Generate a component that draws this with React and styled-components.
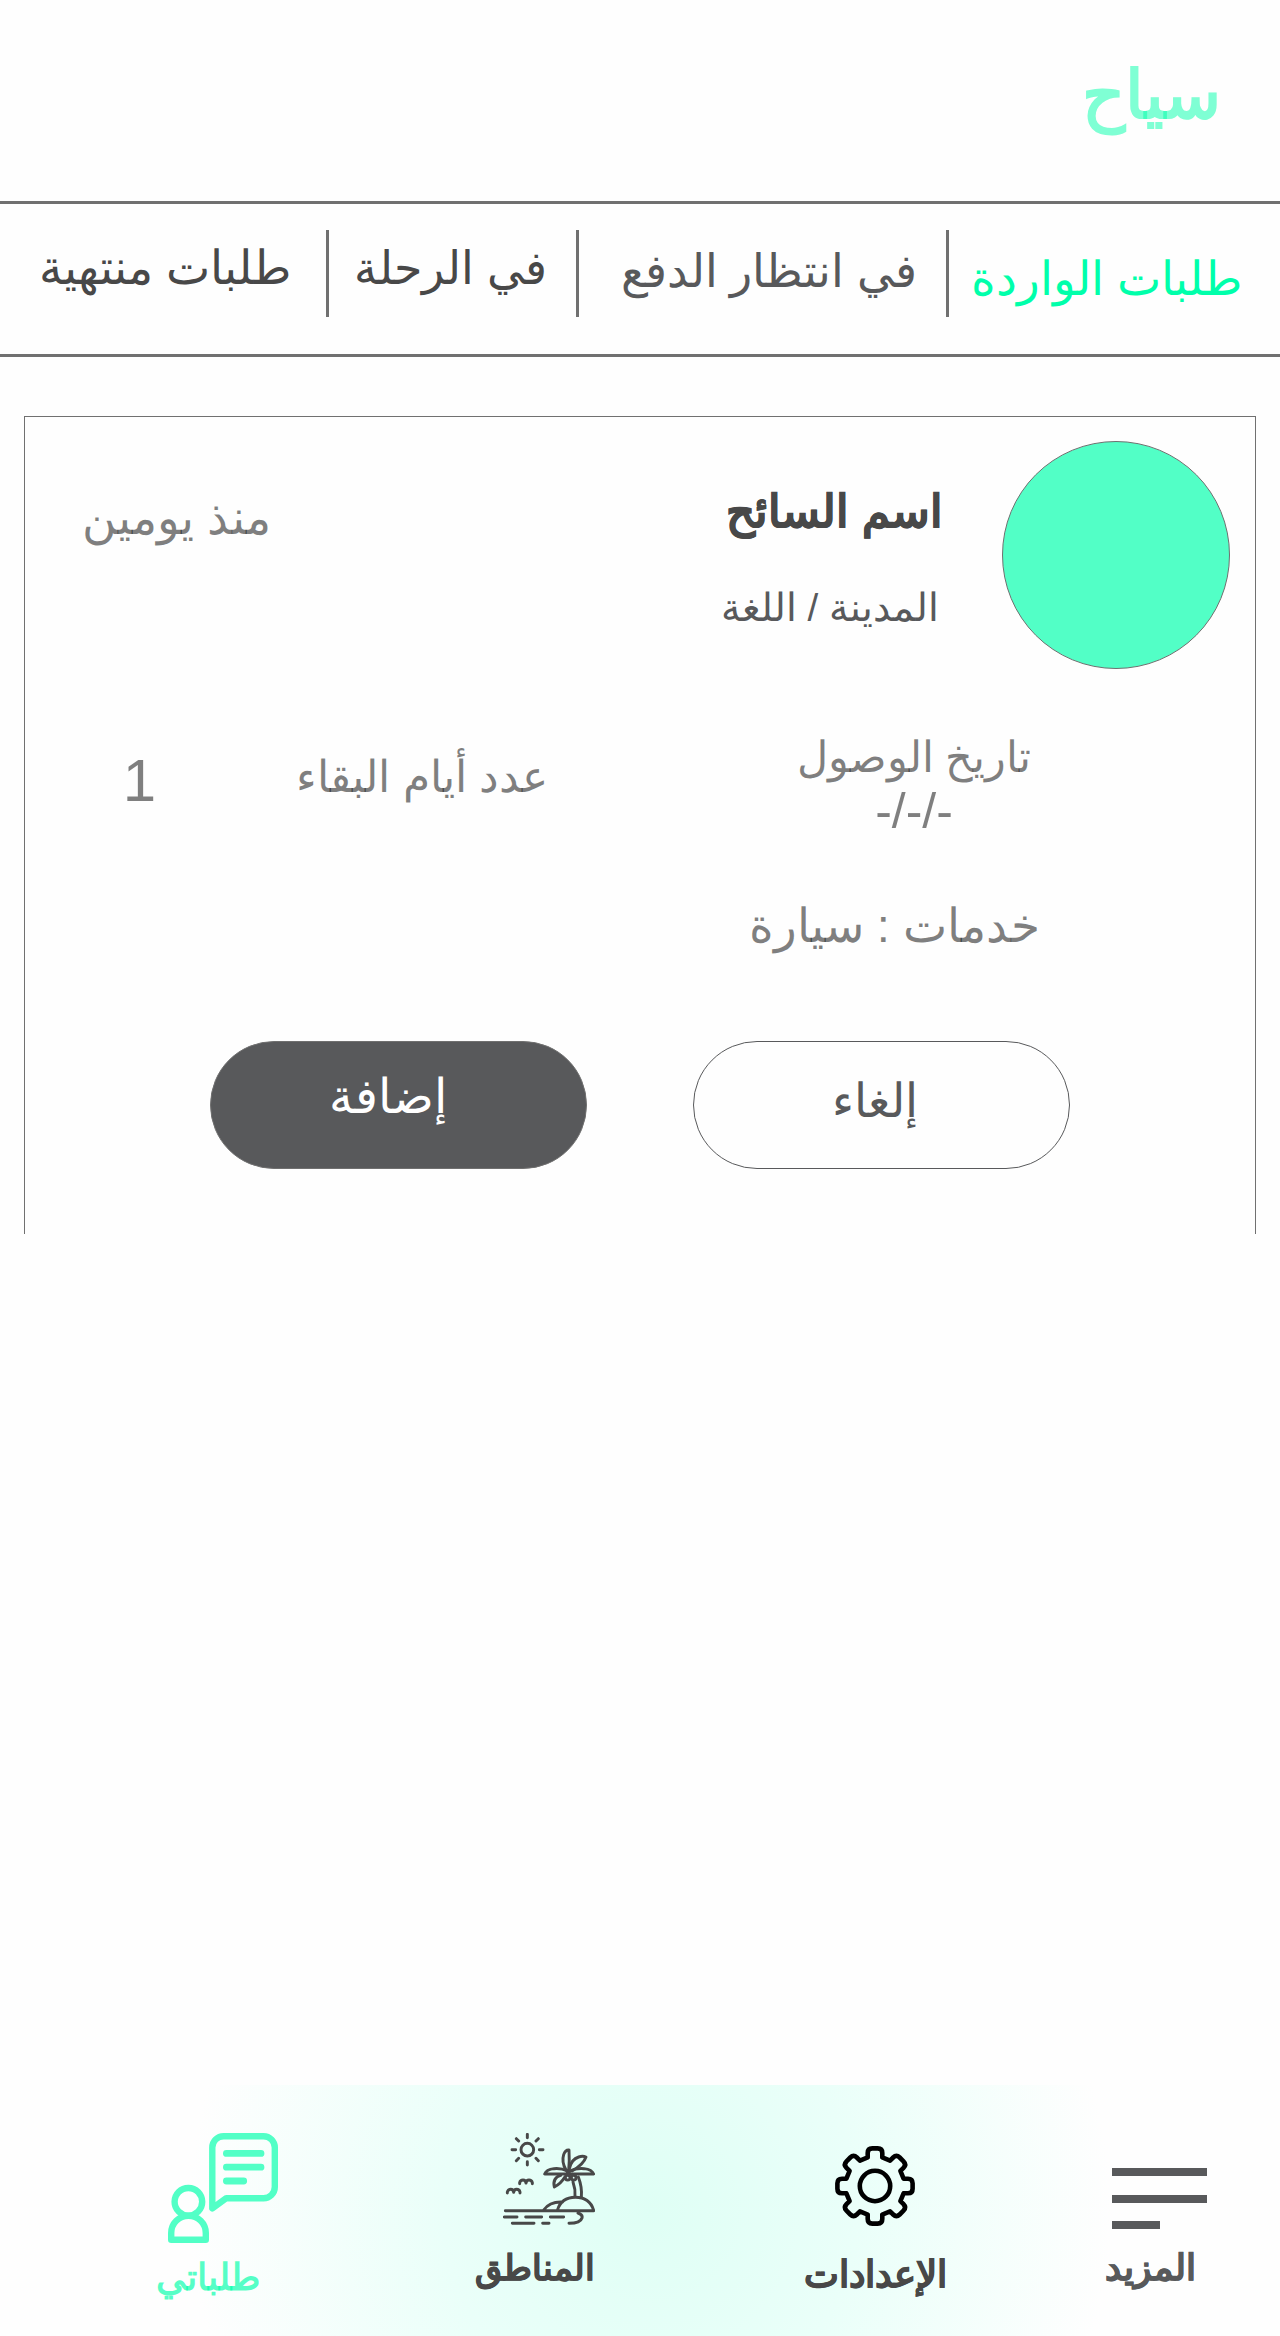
import React from "react";
import styled, { createGlobalStyle } from "styled-components";

const mint = "rgba(0, 255, 170, 0.68)";
const mintSolid = "#52ffc6";
const slate = "#58595b";
const charcoal = "#484848";
const muted = "rgba(0, 0, 0, 0.5)";
const line = "#707070";

const GlobalStyle = createGlobalStyle`
  *, *::before, *::after { box-sizing: border-box; }
  body {
    margin: 0;
    background: #fff;
    font-family: "Liberation Sans", sans-serif;
  }
`;

const Page = styled.div`
  direction: rtl;
  width: 1280px;
  height: 2336px;
  display: flex;
  flex-direction: column;
  background: #fefefe;
  overflow: hidden;
`;

const Header = styled.header`
  height: 201px;
  padding: 55px 59px 0 0;
`;

const Title = styled.h1`
  margin: 0;
  font-size: 67px;
  font-weight: 700;
  line-height: 80px;
  color: rgba(0, 255, 170, 0.5);
`;

const Tabs = styled.nav`
  display: grid;
  grid-template-columns: 331px 3px 367px 3px 247px 3px 326px;
  height: 156px;
  border-top: 3px solid ${line};
  border-bottom: 3px solid ${line};
`;

const Tab = styled.a`
  padding: ${(p) => p.$drop}px ${(p) => p.$inset}px 0 0;
  font-size: ${(p) => p.$size}px;
  line-height: 60px;
  white-space: nowrap;
  color: ${(p) => p.$color};
`;

const Divider = styled.span`
  margin-top: 26px;
  height: 87px;
  background: ${line};
`;

const Card = styled.article`
  margin: 59px 24px 0;
  height: 818px;
  border: 1px solid ${line};
  border-bottom: 0;
`;

const CardHead = styled.div`
  display: flex;
  height: 252px;
  padding: 24px 25px 0 57px;
`;

const Avatar = styled.div`
  width: 228px;
  height: 228px;
  flex: none;
  border-radius: 50%;
  border: 1px solid ${line};
  background: ${mintSolid};
`;

const Identity = styled.div`
  margin-right: 59px;
  padding-top: 41px;
  white-space: nowrap;
`;

const Name = styled.h2`
  margin: 0;
  font-size: 45px;
  font-weight: 700;
  line-height: 60px;
  color: ${charcoal};
  -webkit-text-stroke: 0.7px currentColor;
`;

const City = styled.p`
  margin: 41px 4px 0 0;
  font-size: 38.6px;
  line-height: 50px;
  color: ${slate};
`;

const Posted = styled.time`
  margin-right: auto;
  padding-top: 47px;
  font-size: 47px;
  line-height: 60px;
  white-space: nowrap;
  color: ${muted};
`;

const Details = styled.div`
  display: flex;
  margin-top: 61px;
  padding-right: 223px;
  height: 108px;
  color: ${muted};
  white-space: nowrap;
`;

const Arrival = styled.div`
  width: 236px;
  text-align: center;
  font-size: 42.8px;
  line-height: 54px;
`;

const ArrivalDate = styled.div`
  font-size: 50px;
  line-height: 54px;
`;

const StayLabel = styled.div`
  margin-right: 248px;
  padding-top: 17px;
  width: 261px;
  font-size: 44.3px;
  line-height: 60px;
`;

const StayCount = styled.div`
  margin-right: 131px;
  padding-top: 21px;
  font-size: 60px;
  line-height: 60px;
`;

const Services = styled.p`
  margin: 58px 215px 0 0;
  font-size: 47.1px;
  line-height: 60px;
  color: ${muted};
`;

const Actions = styled.div`
  display: flex;
  gap: 106px;
  margin-top: 85px;
  padding-right: 185px;
`;

const Button = styled.button`
  width: 377px;
  height: 128px;
  border-radius: 64px;
  border: 1px solid ${(p) => (p.$solid ? line : slate)};
  background: ${(p) => (p.$solid ? slate : "transparent")};
  color: ${(p) => (p.$solid ? "#fff" : slate)};
  padding: ${(p) => (p.$solid ? "0 22px 17px 0" : "0 13px 9px 0")};
  font-family: inherit;
  font-size: ${(p) => (p.$solid ? 48 : 47.2)}px;
  line-height: 60px;
`;

const BottomNav = styled.nav`
  display: flex;
  align-items: flex-start;
  margin-top: auto;
  height: 251px;
  background: radial-gradient(circle 460px at 650px 125px, #dffff5 0%, #eafff9 45%, #fefefe 100%);
`;

const NavItem = styled.a`
  display: flex;
  flex-direction: column;
  align-items: ${(p) => (p.$centered ? "center" : "flex-start")};
  width: ${(p) => p.$width}px;
  margin-right: ${(p) => p.$gap}px;
  padding-top: ${(p) => p.$top}px;
  color: ${(p) => p.$color};
`;

const NavLabel = styled.span`
  align-self: ${(p) => (p.$centered ? "center" : "flex-end")};
  margin-top: ${(p) => p.$gap}px;
  font-size: ${(p) => p.$size}px;
  font-weight: 700;
  line-height: 40px;
  white-space: nowrap;
  -webkit-text-stroke: ${(p) => (p.$heavy ? "0.6px currentColor" : "0")};
`;

const Menu = styled.span`
  display: flex;
  flex-direction: column;
  align-items: flex-end;
  gap: 18.5px;
`;

const MenuBar = styled.span`
  width: ${(p) => (p.$short ? 48 : 95)}px;
  height: 8px;
  background: ${slate};
`;

const IslandSvg = styled.svg`
  margin-right: 2px;
`;

function gearPath() {
  const r = (x, y, i) => {
    const a = (i * Math.PI) / 4;
    const c = Math.cos(a);
    const s = Math.sin(a);
    return `${(x * c - y * s).toFixed(2)} ${(x * s + y * c).toFixed(2)}`;
  };
  let d = "";
  for (let i = 0; i < 8; i++) {
    d += `${i ? "L" : "M"}${r(-7.3, -28.6, i)}L${r(-7.3, -33, i)}Q${r(-7.3, -37.6, i)} ${r(-2.7, -37.6, i)}`;
    d += `L${r(2.7, -37.6, i)}Q${r(7.3, -37.6, i)} ${r(7.3, -33, i)}L${r(7.3, -28.6, i)}`;
  }
  return d + "Z";
}

function GearIcon() {
  return (
    <svg width="80" height="80" viewBox="-40 -40 80 80" fill="none" stroke="#000" strokeWidth="4.6" strokeLinejoin="round">
      <path d={gearPath()} />
      <circle r="15.2" />
    </svg>
  );
}

function ChatIcon() {
  return (
    <svg width="110" height="110" viewBox="0 0 110 110" fill="none" stroke={mintSolid} strokeWidth="6.4" strokeLinecap="round" strokeLinejoin="round">
      <path d="M44.3 75.4V14.5A11.3 11.3 0 0 1 55.6 3.2H95.5A11.3 11.3 0 0 1 106.8 14.5V53.9A11.3 11.3 0 0 1 95.5 65.2H58.3Z" />
      <path d="M58.4 20.4H93M58.4 34.2H93M58.4 48H75.7" strokeWidth="6.8" />
      <circle cx="20.4" cy="68.8" r="13.8" />
      <path d="M3.2 106.7V100A17.3 17.3 0 0 1 37.8 100V106.7Z" />
    </svg>
  );
}

function IslandIcon() {
  return (
    <IslandSvg width="92" height="92" viewBox="159 99 276 276" fill="none" stroke={charcoal} strokeWidth="8.8" strokeLinecap="round" strokeLinejoin="round">
      <circle cx="232" cy="149" r="19" />
      <path d="M232 103V113M232 185V195M186 149H197M268 149H279M199 116L206 123M265 116L258 123M199 182L206 175M265 182L258 175" />
      <path d="M209 251V248Q211 240 219 240Q227 240 228 249Q229 240 237 240Q245 240 247 248V251" />
      <path d="M172 279V276Q174 268 182 268Q190 268 191 277Q192 268 200 268Q208 268 210 276V279" />
      <path d="M348 210Q334 186 341 164Q346 149 357 150Q359 184 356 212" />
      <path d="M358 206Q364 178 386 171Q398 167 408 171Q400 194 366 213" />
      <path d="M352 213Q334 204 312 206Q289 209 284 222H352Z" />
      <path d="M358 213Q378 204 402 206Q426 209 431 222H358Z" />
      <path d="M332 226Q307 233 313 261Q332 252 344 232" />
      <circle cx="353" cy="233" r="7" />
      <circle cx="371" cy="233" r="7" />
      <path d="M369 246Q377 268 375 290M385 231Q397 262 394 292" />
      <path d="M322 331Q334 292 376 292Q419 292 431 331M281 330Q299 304 338 306M166 332H431" />
      <path d="M163 351H201M227 351H275M301 351H341M187 370H252M278 370H297M384 339Q399 344 396 354Q391 370 357 370" />
    </IslandSvg>
  );
}

const tabs = [
  { text: "طلبات الواردة", size: 46.8, inset: 38, drop: 45, color: "#00ffaa" },
  { text: "في انتظار الدفع", size: 45.8, inset: 29, drop: 38, color: slate },
  { text: "في الرحلة", size: 46, inset: 29, drop: 34, color: charcoal },
  { text: "طلبات منتهية", size: 47.2, inset: 35, drop: 34, color: charcoal },
];

export default function App() {
  return (
    <>
      <GlobalStyle />
      <Page>
        <Header>
          <Title>سياح</Title>
        </Header>
        <Tabs>
          {tabs.map((t, i) => (
            <React.Fragment key={t.text}>
              {i > 0 && <Divider />}
              <Tab $size={t.size} $inset={t.inset} $drop={t.drop} $color={t.color}>
                {t.text}
              </Tab>
            </React.Fragment>
          ))}
        </Tabs>
        <Card>
          <CardHead>
            <Avatar />
            <Identity>
              <Name>اسم السائح</Name>
              <City>المدينة / اللغة</City>
            </Identity>
            <Posted>منذ يومين</Posted>
          </CardHead>
          <Details>
            <Arrival>
              تاريخ الوصول
              <ArrivalDate>-/-/-</ArrivalDate>
            </Arrival>
            <StayLabel>عدد أيام البقاء</StayLabel>
            <StayCount>1</StayCount>
          </Details>
          <Services>خدمات : سيارة</Services>
          <Actions>
            <Button>إلغاء</Button>
            <Button $solid>إضافة</Button>
          </Actions>
        </Card>
        <BottomNav>
          <NavItem $width={102} $gap={73} $top={83} $color={slate}>
            <Menu>
              <MenuBar />
              <MenuBar />
              <MenuBar $short />
            </Menu>
            <NavLabel $gap={19} $size={36.2} $heavy>المزيد</NavLabel>
          </NavItem>
          <NavItem $width={148} $gap={156} $top={61} $color={charcoal} $centered>
            <GearIcon />
            <NavLabel $gap={29} $size={36.8} $centered $heavy>الإعدادات</NavLabel>
          </NavItem>
          <NavItem $width={122} $gap={204} $top={48} $color={charcoal}>
            <IslandIcon />
            <NavLabel $gap={23} $size={35.2} $heavy>المناطق</NavLabel>
          </NavItem>
          <NavItem $width={122} $gap={197} $top={48} $color={mint}>
            <ChatIcon />
            <NavLabel $gap={15} $size={36.8}>طلباتي</NavLabel>
          </NavItem>
        </BottomNav>
      </Page>
    </>
  );
}
